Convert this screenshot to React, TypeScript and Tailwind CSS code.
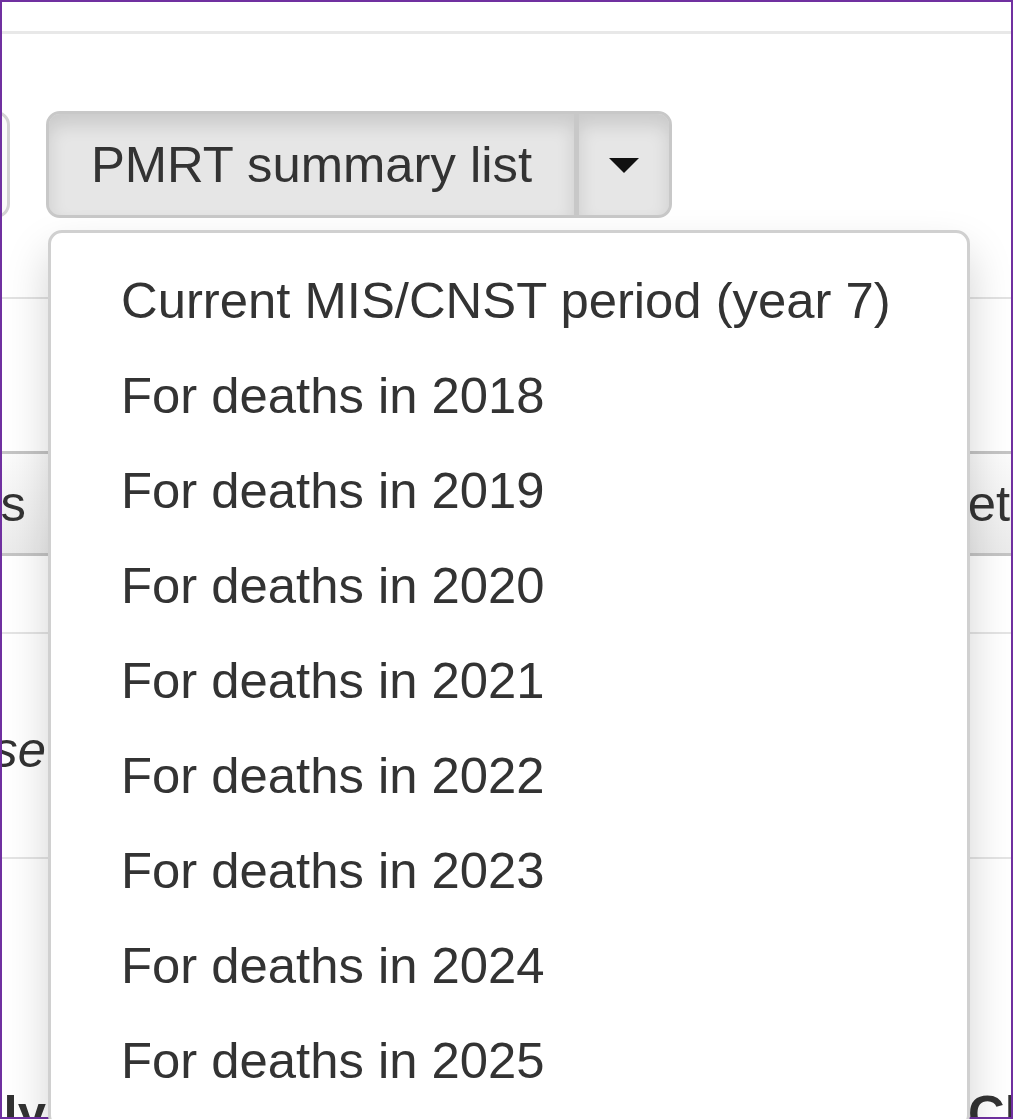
const periods = [
  "Current MIS/CNST period (year 7)",
  "For deaths in 2018",
  "For deaths in 2019",
  "For deaths in 2020",
  "For deaths in 2021",
  "For deaths in 2022",
  "For deaths in 2023",
  "For deaths in 2024",
  "For deaths in 2025",
];

function SummaryDropdown() {
  return (
    <div className="relative flex">
      <button className="flex w-[531px] items-center justify-center rounded-l-[14px] border-[3px] border-[#c8c8c8] bg-[#e6e6e6] shadow-[inset_0_11px_18px_rgba(0,0,0,0.12)] whitespace-nowrap text-[#333]">
        PMRT summary list
      </button>
      <button className="-ml-[1px] flex w-[96px] items-center justify-center rounded-r-[14px] border-[3px] border-[#c8c8c8] bg-[#e6e6e6] shadow-[inset_0_11px_18px_rgba(0,0,0,0.12)]">
        <span className="mt-[2px] h-0 w-0 border-x-[15px] border-t-[15px] border-x-transparent border-t-[#111]" />
      </button>

      {/* open menu */}
      <ul className="absolute left-[2px] top-[calc(100%+12px)] z-10 w-[922px] rounded-[14px] border-[3px] border-[#d0d0d0] bg-white pt-[20px] pb-[18px] shadow-[0_22px_44px_rgba(0,0,0,0.175)]">
        {periods.map((p) => (
          <li
            key={p}
            className="px-[70px] py-[11px] leading-[73px] whitespace-nowrap text-[#333]"
          >
            {p}
          </li>
        ))}
      </ul>
    </div>
  );
}

export default function App() {
  return (
    <div className="relative h-[1119px] w-[1013px] overflow-hidden bg-white font-['Liberation_Sans',Arial,sans-serif] text-[50.8px] leading-[58px] text-[#333]">
      <div className="h-[34px] border-b-[3px] border-[#e8e8e8]" />

      {/* toolbar */}
      <div className="mt-[77px] flex h-[107px] gap-[36px]">
        <div className="-ml-[50px] w-[60px] rounded-r-[14px] border-[3px] border-[#d2d2d2] bg-[#fafafa]" />
        <SummaryDropdown />
      </div>

      {/* table under the menu */}
      <div className="mt-[79px]">
        <div className="h-[154px] border-t-2 border-[#e2e2e2]" />
        <div className="flex h-[105px] items-center border-y-[3px] border-[#c4c4c4] bg-gradient-to-b from-[#fbfbfb] to-[#ebebeb]">
          <div className="flex w-[48px] justify-end overflow-hidden">
            <span className="whitespace-nowrap pr-[22px]">Status</span>
          </div>
          <div className="ml-auto w-[192px] overflow-hidden whitespace-nowrap">
            Completed
          </div>
        </div>
        <div className="h-[78px] border-b-2 border-[#e4e4e4]" />
        <div className="flex h-[225px] items-center border-b-2 border-[#e4e4e4] pt-[8px]">
          <div className="flex w-[48px] justify-end overflow-hidden">
            <span className="whitespace-nowrap pr-[2px] italic">Choose</span>
          </div>
        </div>
        <div className="flex pt-[226px] font-bold">
          <div className="flex w-[48px] justify-end overflow-hidden">
            <span className="whitespace-nowrap pr-[2px]">Family</span>
          </div>
          <div className="ml-auto w-[45px] overflow-hidden whitespace-nowrap">
            Closed
          </div>
        </div>
      </div>

      <div className="pointer-events-none absolute inset-0 border-2 border-[#7030a0]" />
    </div>
  );
}
